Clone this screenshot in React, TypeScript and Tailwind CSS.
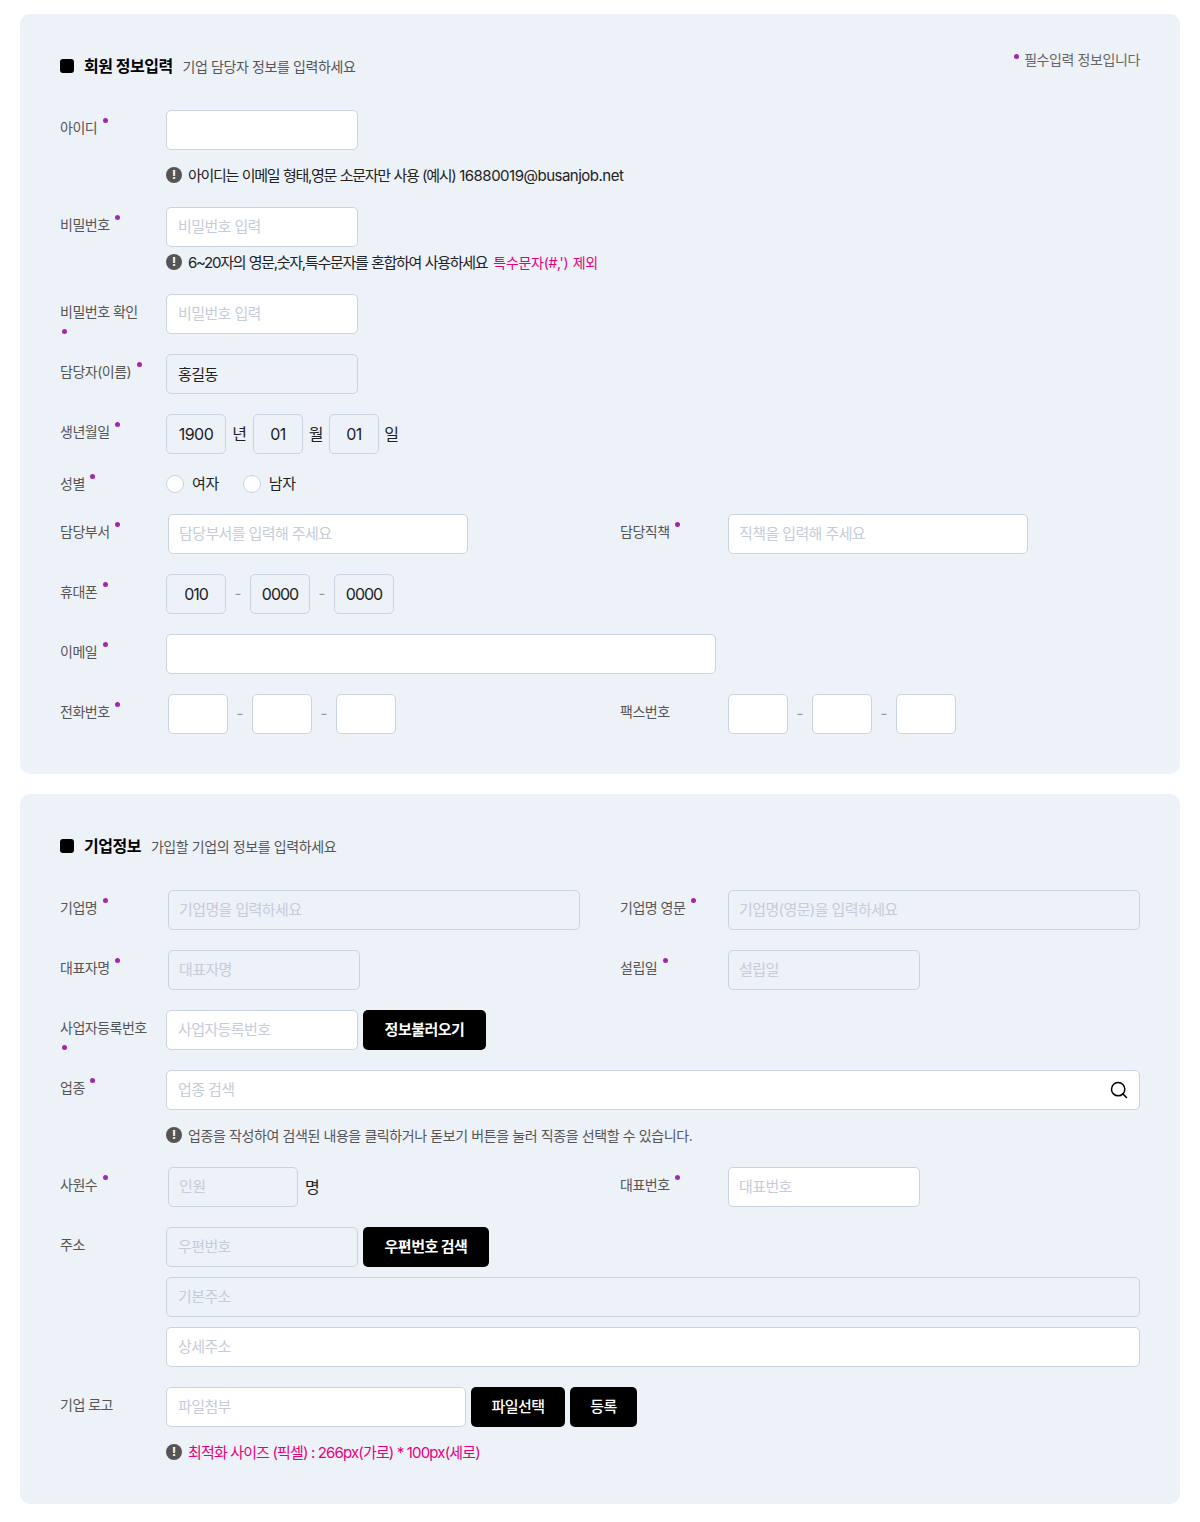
import { Search } from "lucide-react";
import type { ReactNode } from "react";

const inputBase =
	"h-10 rounded-[5px] border border-[#ccd3e0] text-[#222] outline-none placeholder:text-[#c6ccd8]";

function Field({
	w,
	placeholder,
	value,
	off,
	center,
	tight,
	inset,
}: {
	w: string;
	placeholder?: string;
	value?: string;
	off?: boolean;
	center?: boolean;
	tight?: boolean;
	inset?: boolean;
}) {
	const text = center
		? `text-center text-[16px] ${tight ? "tracking-[-1px]" : "tracking-[-0.5px]"}`
		: `${inset ? "pl-[10px]" : "pl-[11px]"} pr-[11px] pb-[1px] text-[15px] tracking-[-0.6px]`;
	return (
		<input
			readOnly
			defaultValue={value}
			placeholder={placeholder}
			className={`${inputBase} ${w} ${off ? "bg-[#edf1f8]" : "bg-white"} ${text}`}
		/>
	);
}

function Dot({ low }: { low?: boolean }) {
	return (
		<span
			className={`ml-[2px] inline-block h-[5px] w-[5px] rounded-full bg-[#a426b0] ${low ? "align-[3px]" : "align-[10px]"}`}
		/>
	);
}

function Label({ text, req = true, w = "w-[106px]", low }: { text: string; req?: boolean; w?: string; low?: boolean }) {
	return (
		<div className={`${w} h-10 shrink-0 pt-[8px]`}>
			<div className="w-[86px] break-keep text-[14px] leading-[20px] tracking-[-0.5px] text-[#555]">
				{text}
				{req && (
					<>
						{" "}
						<Dot low={low} />
					</>
				)}
			</div>
		</div>
	);
}

function Help({ children, mt, pink, gray }: { children: ReactNode; mt: string; pink?: boolean; gray?: boolean }) {
	return (
		<div
			className={`${mt} ml-[106px] flex h-5 items-center gap-[6px] ${pink ? "text-[15px] tracking-[-0.85px] text-[#e6007e]" : gray ? "text-[14px] tracking-[-0.4px] text-[#555]" : "text-[15px] tracking-[-1.3px] text-[#222] [word-spacing:0.8px]"}`}
		>
			<span className="flex h-4 w-4 shrink-0 items-center justify-center rounded-full bg-[#555] text-[12px] font-bold leading-none tracking-normal text-white">
				!
			</span>
			<span className={gray ? "" : "pt-[2px]"}>{children}</span>
		</div>
	);
}

function Title({ title, sub, note }: { title: string; sub: string; note?: boolean }) {
	return (
		<div className="mb-8 flex h-6 items-center">
			<span className="mr-[10px] h-[14px] w-[14px] rounded-[3px] bg-black" />
			<strong className="text-[16px] font-bold tracking-[-0.5px] text-black">{title}</strong>
			<span className="ml-[10px] text-[14px] tracking-[-0.4px] text-[#555]">{sub}</span>
			{note && (
				<span className="ml-auto -translate-y-[7px] text-[14px] tracking-[-0.4px] text-[#666]">
					<span className="mr-[5px] inline-block h-[5px] w-[5px] rounded-full bg-[#a426b0] align-[6px]" />
					필수입력 정보입니다
				</span>
			)}
		</div>
	);
}

function Dash() {
	return <span className="w-6 text-center text-[15px] text-[#999]">-</span>;
}

function Unit({ children, w }: { children: ReactNode; w: string }) {
	return <span className={`${w} text-center text-[16px] text-[#222]`}>{children}</span>;
}

function Radio({ label }: { label: string }) {
	return (
		<span className="flex items-center gap-2 text-[15px] tracking-[-0.4px] text-[#222]">
			<span className="h-[18px] w-[18px] rounded-full border border-[#ccd3e0] bg-white" />
			{label}
		</span>
	);
}

function Btn({ children, w, light }: { children: ReactNode; w: string; light?: boolean }) {
	return (
		<button
			className={`${w} h-10 rounded-[5px] bg-black text-[15px] tracking-[-0.5px] text-white ${light ? "font-medium" : "font-bold"}`}
		>
			{children}
		</button>
	);
}

function Row({ children, mt = "mt-5" }: { children: ReactNode; mt?: string }) {
	return <div className={`${mt} flex items-start`}>{children}</div>;
}

function Left({ children }: { children: ReactNode }) {
	return <div className="flex w-[560px] shrink-0 items-start">{children}</div>;
}

function Inline({ children }: { children: ReactNode }) {
	return <div className="flex items-center">{children}</div>;
}

export default function App() {
	return (
		<div className="flex flex-col gap-5 bg-white px-5 pb-[18px] pt-[14px] font-['Inter','Noto_Sans_CJK_KR',sans-serif]">
			<section className="rounded-[10px] bg-[#edf1f8] px-10 pb-10 pt-10">
				<Title title="회원 정보입력" sub="기업 담당자 정보를 입력하세요" note />
				<Row mt="mt-0">
					<Label text="아이디" />
					<Field w="w-[192px]" />
				</Row>
				<Help mt="mt-[15px]">
					아이디는 이메일 형태,영문 소문자만 사용 (예시) <span className="tracking-[-0.5px]">16880019@busanjob.net</span>
				</Help>
				<Row mt="mt-[22px]">
					<Label text="비밀번호" />
					<Field w="w-[192px]" placeholder="비밀번호 입력" />
				</Row>
				<Help mt="mt-[5px]">
					6~20자의 영문,숫자,특수문자를 혼합하여 사용하세요
					<span className="ml-[6px] text-[14px] tracking-[-0.3px] text-[#e6007e]">특수문자(#,') 제외</span>
				</Help>
				<Row mt="mt-[22px]">
					<Label text="비밀번호 확인" low />
					<Field w="w-[192px]" placeholder="비밀번호 입력" />
				</Row>
				<Row>
					<Label text="담당자(이름)" />
					<Field w="w-[192px]" value="홍길동" off />
				</Row>
				<Row>
					<Label text="생년월일" />
					<Inline>
						<Field w="w-[60px]" value="1900" off center />
						<Unit w="w-[27px]">년</Unit>
						<Field w="w-[50px]" value="01" off center />
						<Unit w="w-[26px]">월</Unit>
						<Field w="w-[50px]" value="01" off center />
						<Unit w="w-[25px]">일</Unit>
					</Inline>
				</Row>
				<div className="mt-5 flex h-5 items-center">
					<div className="w-[106px] text-[14px] leading-[20px] tracking-[-0.5px] text-[#555]">
						성별 <Dot />
					</div>
					<div className="flex gap-6">
						<Radio label="여자" />
						<Radio label="남자" />
					</div>
				</div>
				<Row>
					<Left>
						<Label text="담당부서" w="w-[108px]" />
						<Field w="w-[300px]" placeholder="담당부서를 입력해 주세요" inset />
					</Left>
					<Label text="담당직책" w="w-[108px]" />
					<Field w="w-[300px]" placeholder="직책을 입력해 주세요" inset />
				</Row>
				<Row>
					<Label text="휴대폰" />
					<Inline>
						<Field w="w-[60px]" value="010" off center tight />
						<Dash />
						<Field w="w-[60px]" value="0000" off center tight />
						<Dash />
						<Field w="w-[60px]" value="0000" off center tight />
					</Inline>
				</Row>
				<Row>
					<Label text="이메일" />
					<Field w="w-[550px]" />
				</Row>
				<Row>
					<Left>
						<Label text="전화번호" w="w-[108px]" />
						<Inline>
							<Field w="w-[60px]" />
							<Dash />
							<Field w="w-[60px]" />
							<Dash />
							<Field w="w-[60px]" />
						</Inline>
					</Left>
					<Label text="팩스번호" req={false} w="w-[108px]" />
					<Inline>
						<Field w="w-[60px]" />
						<Dash />
						<Field w="w-[60px]" />
						<Dash />
						<Field w="w-[60px]" />
					</Inline>
				</Row>
			</section>

			<section className="rounded-[10px] bg-[#edf1f8] px-10 pb-[42px] pt-10">
				<Title title="기업정보" sub="가입할 기업의 정보를 입력하세요" />
				<Row mt="mt-0">
					<Left>
						<Label text="기업명" w="w-[108px]" />
						<Field w="w-[412px]" placeholder="기업명을 입력하세요" off inset />
					</Left>
					<Label text="기업명 영문" w="w-[108px]" />
					<Field w="w-[412px]" placeholder="기업명(영문)을 입력하세요" off inset />
				</Row>
				<Row>
					<Left>
						<Label text="대표자명" w="w-[108px]" />
						<Field w="w-[192px]" placeholder="대표자명" off inset />
					</Left>
					<Label text="설립일" w="w-[108px]" />
					<Field w="w-[192px]" placeholder="설립일" off inset />
				</Row>
				<Row>
					<Label text="사업자등록번호" low />
					<div className="flex gap-[5px]">
						<Field w="w-[192px]" placeholder="사업자등록번호" />
						<Btn w="w-[123px]">정보불러오기</Btn>
					</div>
				</Row>
				<Row>
					<Label text="업종" />
					<div className="relative">
						<Field w="w-[974px]" placeholder="업종 검색" />
						<Search className="absolute right-[11px] top-[10px] h-5 w-5 text-black" strokeWidth={1.8} />
					</div>
				</Row>
				<Help mt="mt-[15px]" gray>
					업종을 작성하여 검색된 내용을 클릭하거나 돋보기 버튼을 눌러 직종을 선택할 수 있습니다.
				</Help>
				<Row mt="mt-[22px]">
					<Left>
						<Label text="사원수" w="w-[108px]" />
						<div className="flex items-center">
							<Field w="w-[130px]" placeholder="인원" off inset />
							<span className="ml-[7px] text-[16px] text-[#222]">명</span>
						</div>
					</Left>
					<Label text="대표번호" w="w-[108px]" />
					<Field w="w-[192px]" placeholder="대표번호" inset />
				</Row>
				<Row>
					<Label text="주소" req={false} />
					<div className="flex flex-col gap-[10px]">
						<div className="flex gap-[5px]">
							<Field w="w-[192px]" placeholder="우편번호" off />
							<Btn w="w-[126px]">우편번호 검색</Btn>
						</div>
						<Field w="w-[974px]" placeholder="기본주소" off />
						<Field w="w-[974px]" placeholder="상세주소" />
					</div>
				</Row>
				<Row>
					<Label text="기업 로고" req={false} />
					<div className="flex gap-[5px]">
						<Field w="w-[300px]" placeholder="파일첨부" />
						<Btn w="w-[94px]" light>
							파일선택
						</Btn>
						<Btn w="w-[67px]" light>
							등록
						</Btn>
					</div>
				</Row>
				<Help mt="mt-[15px]" pink>
					최적화 사이즈 (픽셀) : 266px(가로) * 100px(세로)
				</Help>
			</section>
		</div>
	);
}
